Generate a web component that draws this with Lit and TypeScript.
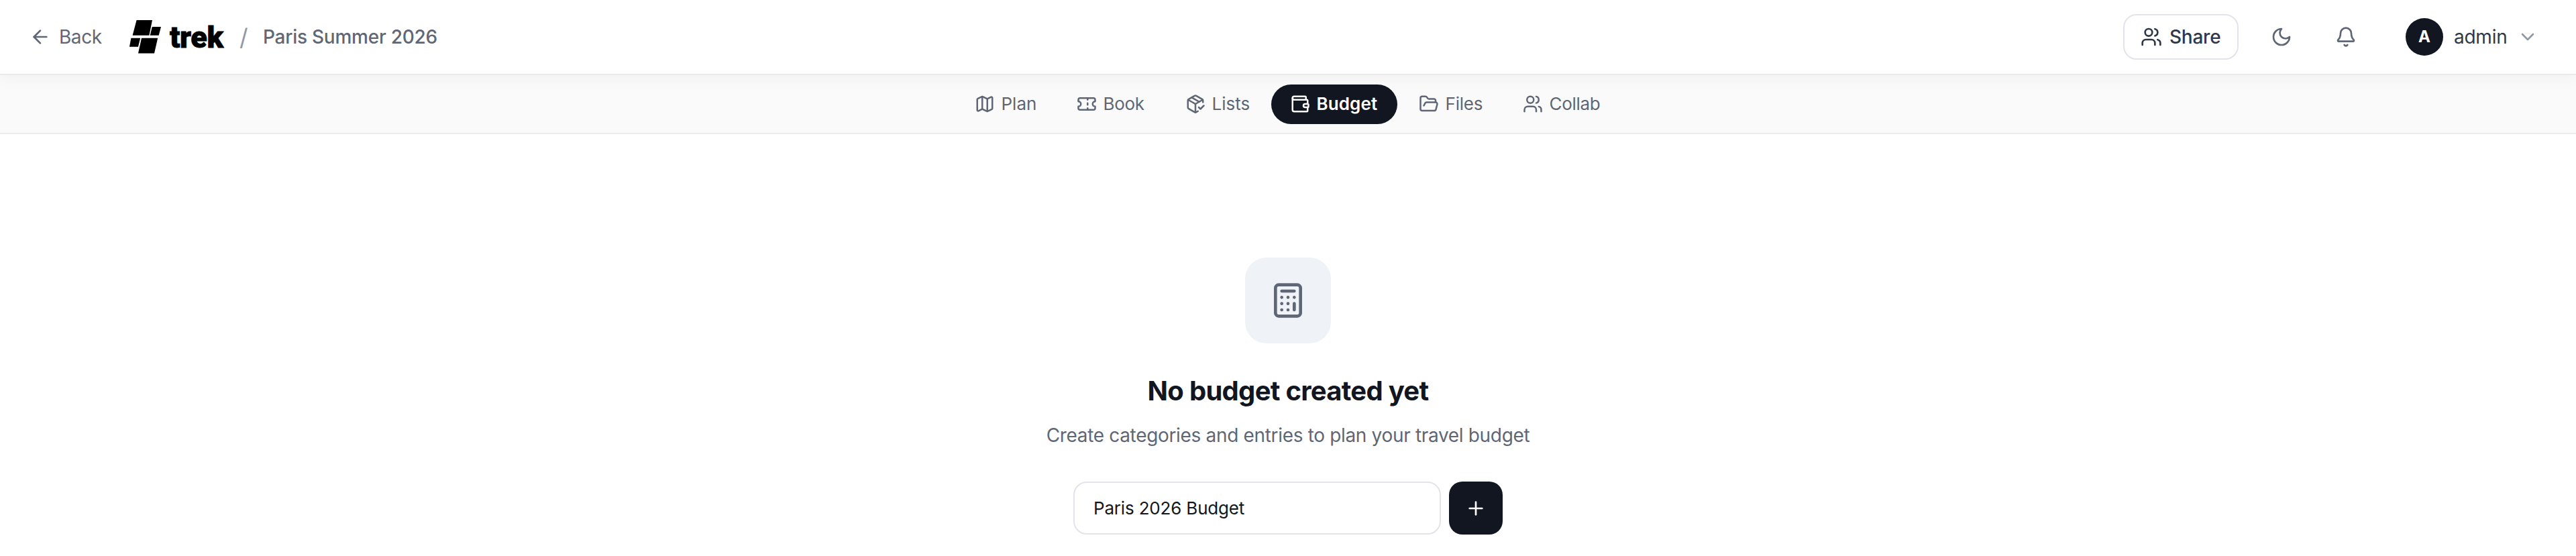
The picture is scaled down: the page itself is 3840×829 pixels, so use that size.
import { LitElement, html, css, svg } from "lit";
import { customElement } from "lit/decorators.js";
import { classMap } from "lit/directives/class-map.js";

const icons: Record<string, unknown> = {
  back: svg`<path d="m12 19-7-7 7-7"/><path d="M19 12H5"/>`,
  users: svg`<path d="M16 21v-2a4 4 0 0 0-4-4H6a4 4 0 0 0-4 4v2"/><circle cx="9" cy="7" r="4"/><path d="M22 21v-2a4 4 0 0 0-3-3.87"/><path d="M16 3.13a4 4 0 0 1 0 7.75"/>`,
  moon: svg`<path d="M12 3a6 6 0 0 0 9 9 9 9 0 1 1-9-9Z"/>`,
  bell: svg`<path d="M10.268 21a2 2 0 0 0 3.464 0"/><path d="M3.262 15.326A1 1 0 0 0 4 17h16a1 1 0 0 0 .74-1.673C19.41 13.956 18 12.499 18 8A6 6 0 0 0 6 8c0 4.499-1.411 5.956-2.738 7.326"/>`,
  chevron: svg`<path d="m6 9 6 6 6-6"/>`,
  map: svg`<path d="M14.106 5.553a2 2 0 0 0 1.788 0l3.659-1.83A1 1 0 0 1 21 4.619v12.764a1 1 0 0 1-.553.894l-4.553 2.277a2 2 0 0 1-1.788 0l-4.212-2.106a2 2 0 0 0-1.788 0l-3.659 1.83A1 1 0 0 1 3 19.381V6.618a1 1 0 0 1 .553-.894l4.553-2.277a2 2 0 0 1 1.788 0z"/><path d="M15 5.764v15"/><path d="M9 3.236v15"/>`,
  ticket: svg`<path d="M2 9a3 3 0 0 1 0 6v2a2 2 0 0 0 2 2h16a2 2 0 0 0 2-2v-2a3 3 0 0 1 0-6V7a2 2 0 0 0-2-2H4a2 2 0 0 0-2 2Z"/><path d="M13 5v2"/><path d="M13 17v2"/><path d="M13 11v2"/>`,
  package: svg`<path d="m16 16 2 2 4-4"/><path d="M21 10V8a2 2 0 0 0-1-1.73l-7-4a2 2 0 0 0-2 0l-7 4A2 2 0 0 0 3 8v8a2 2 0 0 0 1 1.73l7 4a2 2 0 0 0 2 0l2-1.14"/><path d="m7.5 4.27 9 5.15"/><path d="M3.29 7 12 12l8.71-5"/><path d="M12 22V12"/>`,
  wallet: svg`<path d="M19 7V4a1 1 0 0 0-1-1H5a2 2 0 0 0 0 4h15a1 1 0 0 1 1 1v4h-3a2 2 0 0 0 0 4h3a1 1 0 0 0 1-1v-2a1 1 0 0 0-1-1"/><path d="M3 5v14a2 2 0 0 0 2 2h15a1 1 0 0 0 1-1v-4"/>`,
  folder: svg`<path d="m6 14 1.5-2.9A2 2 0 0 1 9.24 10H20a2 2 0 0 1 1.94 2.5l-1.54 6a2 2 0 0 1-1.95 1.5H4a2 2 0 0 1-2-2V5a2 2 0 0 1 2-2h3.9a2 2 0 0 1 1.69.9l.81 1.2a2 2 0 0 0 1.67.9H18a2 2 0 0 1 2 2v2"/>`,
  calculator: svg`<rect width="16" height="20" x="4" y="2" rx="2"/><path d="M8 6h8M16 14v4M16 10h.01M12 10h.01M8 10h.01M12 14h.01M8 14h.01M12 18h.01M8 18h.01"/>`,
  plus: svg`<path d="M5 12h14"/><path d="M12 5v14"/>`,
};

const icon = (name: string, size: number) => html`<svg
  class="icon" width=${size} height=${size} viewBox="0 0 24 24">${icons[name]}</svg>`;

const tabs = [
  { id: "plan", label: "Plan", icon: "map" },
  { id: "book", label: "Book", icon: "ticket" },
  { id: "lists", label: "Lists", icon: "package" },
  { id: "budget", label: "Budget", icon: "wallet" },
  { id: "files", label: "Files", icon: "folder" },
  { id: "collab", label: "Collab", icon: "users" },
];

@customElement("app-root")
class AppRoot extends LitElement {
  static styles = css`
    :host { display: block; min-height: 829px; background: #fff; font-family: Inter, "Liberation Sans", sans-serif; color: #121620; }
    * { box-sizing: border-box; }
    .icon { display: block; flex: none; fill: none; stroke: currentColor; stroke-width: 2; stroke-linecap: round; stroke-linejoin: round; }
    button, input { font: inherit; color: inherit; margin: 0; border: 0; padding: 0; background: none; }

    .top { position: relative; z-index: 1; height: 112px; display: flex; align-items: center; justify-content: space-between; padding: 0 56px 0 44px; background: #fff; border-bottom: 2px solid #ebebeb; box-shadow: 0 2px 24px rgba(0, 0, 0, 0.05); font-size: 28px; line-height: 40px; }
    .left, .right { display: flex; align-items: center; white-space: nowrap; }
    .back { display: flex; align-items: center; gap: 12px; width: 148px; color: #5f6675; letter-spacing: -0.45px; }
    .logo { display: flex; align-items: center; width: 165px; color: #000; }
    .mark { display: block; fill: #000; width: 48px; height: 50px; flex: none; }
    .word { margin-left: 13px; padding-top: 2px; font: 900 45px/50px Roboto, sans-serif; letter-spacing: -0.4px; -webkit-text-stroke: 0.8px #000; }
    .slash { width: 35px; color: #9199a8; font-size: 35px; }
    .trip { font-weight: 500; color: #5f6675; letter-spacing: -0.25px; }

    .share { display: flex; align-items: center; gap: 11px; width: 172px; height: 68px; padding-left: 24px; border: 2px solid #e3e3ea; border-radius: 20px; font-weight: 500; color: #2f3848; letter-spacing: -0.25px; }
    .tool { color: #5f6675; margin-left: 48px; }
    .tool + .tool { margin-left: 64px; }
    .avatar { display: grid; place-items: center; width: 56px; height: 56px; margin-left: 73px; border-radius: 50%; background: #121620; color: #fff; font-size: 24px; font-weight: 700; }
    .user { width: 94px; margin-left: 16px; color: #2f3848; letter-spacing: -0.25px; }
    .chev { color: #9199a8; }

    .nav { height: 88px; display: flex; justify-content: center; align-items: center; gap: 4px; background: #fafafa; border-bottom: 2px solid #ebebeb; }
    .tab { display: flex; align-items: center; gap: 10px; height: 59px; padding: 0 0 0 28px; border-radius: 30px; color: #5f6675; font-size: 26px; line-height: 40px; white-space: nowrap; }
    .plan { width: 148px; }
    .book { width: 158px; letter-spacing: -0.35px; }
    .lists { width: 152px; }
    .budget { width: 188px; letter-spacing: 0.1px; }
    .files { width: 151px; letter-spacing: -0.2px; }
    .collab { width: 174px; letter-spacing: -0.3px; }
    .active { background: #121620; color: #fff; font-weight: 600; }

    .empty { display: flex; flex-direction: column; align-items: center; padding-top: 184px; }
    .tile { display: grid; place-items: center; width: 128px; height: 128px; border-radius: 32px; background: #eff2f7; color: #5f6675; }
    h2 { margin: 47px 0 0; font-size: 40px; line-height: 48px; font-weight: 700; letter-spacing: -0.72px; }
    p { margin: 21px 0 0; font-size: 28px; line-height: 42px; color: #5f6675; letter-spacing: -0.33px; }
    .form { display: flex; gap: 12px; margin-top: 48px; }
    .name { width: 548px; height: 79px; padding: 0 28px; border: 2px solid #e3e3ea; border-radius: 20px; background: #fff; font-size: 26px; letter-spacing: -0.18px; outline: none; }
    .add { display: grid; place-items: center; width: 80px; height: 79px; border-radius: 20px; background: #121620; color: #fff; }
  `;

  render() {
    return html`
      <header class="top">
        <div class="left">
          <button class="back">${icon("back", 32)}<span>Back</span></button>
          <div class="logo">
            <svg class="mark" viewBox="0 0 48 50">
              <path d="M11.6 0H35l-4.6 22.7H5.6ZM34.8 10H48l-3.3 12.7H31.7ZM3.4 26.7H17.2L14 39.7H1ZM19 26.7H43.2L38 49.6H14Z"/>
            </svg>
            <span class="word">trek</span>
          </div>
          <span class="slash">/</span>
          <span class="trip">Paris Summer 2026</span>
        </div>
        <div class="right">
          <button class="share">${icon("users", 32)}<span>Share</span></button>
          <button class="tool">${icon("moon", 32)}</button>
          <button class="tool">${icon("bell", 32)}</button>
          <div class="avatar">A</div>
          <span class="user">admin</span>
          <span class="chev">${icon("chevron", 32)}</span>
        </div>
      </header>
      <nav class="nav">
        ${tabs.map((t) => html`
          <button class=${classMap({ tab: true, [t.id]: true, active: t.id === "budget" })}>
            ${icon(t.icon, 30)}<span>${t.label}</span>
          </button>`)}
      </nav>
      <main class="empty">
        <div class="tile">${icon("calculator", 56)}</div>
        <h2>No budget created yet</h2>
        <p>Create categories and entries to plan your travel budget</p>
        <div class="form">
          <input class="name" .value=${"Paris 2026 Budget"} />
          <button class="add">${icon("plus", 32)}</button>
        </div>
      </main>
    `;
  }
}
